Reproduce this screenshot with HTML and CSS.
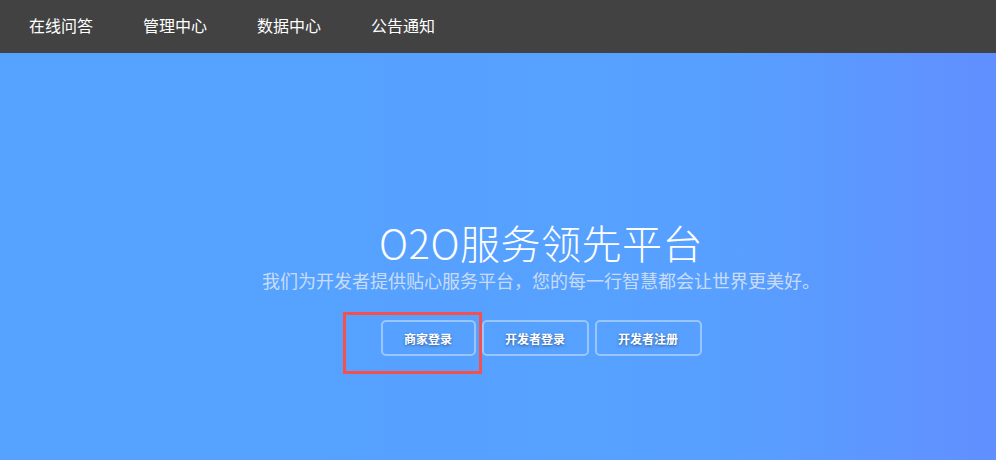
FILE: index.html
```html
<!DOCTYPE html>
<html lang="zh-CN">
<head>
    <meta charset="UTF-8">
    <meta name="viewport" content="width=device-width, initial-scale=1.0">
    <title>O2O服务领先平台</title>
    <link rel="stylesheet" href="styles.css">
</head>
<body>
    <!-- top nav -->
    <div class="top-nav">
        <a class="nav-item" href="#">在线问答</a>
        <a class="nav-item" href="#">管理中心</a>
        <a class="nav-item" href="#">数据中心</a>
        <a class="nav-item" href="#">公告通知</a>
    </div>

    <!-- hero -->
    <div class="hero">
        <h1 class="hero-title">O2O服务领先平台</h1>
        <p class="hero-sub">我们为开发者提供贴心服务平台，您的每一行智慧都会让世界更美好。</p>
        <div class="hero-buttons">
            <a class="hero-btn btn-merchant" href="#">商家登录</a>
            <a class="hero-btn" href="#">开发者登录</a>
            <a class="hero-btn" href="#">开发者注册</a>
            <div class="highlight-box"></div>
        </div>
    </div>
</body>
</html>
```

FILE: styles.css
```css
* {
    box-sizing: border-box;
}

body {
    margin: 0;
    height: 100vh;
    display: flex;
    flex-direction: column;
    background: linear-gradient(to right, #55a3ff 0%, #57a0ff 72%, #618fff 100%);
    font-family: "Noto Sans CJK SC", "Noto Sans", sans-serif;
    color: white;
}

.top-nav {
    height: 53px;
    background: #424242;
    display: flex;
    align-items: center;
    padding: 0 0 4px 29px;
    gap: 50px;
}

.nav-item {
    color: white;
    text-decoration: none;
    font-size: 16px;
    line-height: 20px;
}

.hero {
    flex: 1;
    display: flex;
    flex-direction: column;
    align-items: center;
    padding: 166px 0 0 86px;
}

.hero-title {
    margin: 0;
    font-size: 40px;
    font-weight: 300;
    line-height: 46px;
    letter-spacing: 0.5px;
    font-family: "Noto Sans CJK SC", "Open Sans", sans-serif;
}

.hero-sub {
    margin: 3px 0 0 0;
    font-size: 18px;
    line-height: 24px;
    color: rgba(230, 236, 246, 0.8);
}

.hero-buttons {
    position: relative;
    display: flex;
    gap: 6px;
    margin-top: 28px;
}

.hero-btn {
    width: 107px;
    height: 36px;
    display: flex;
    align-items: center;
    justify-content: center;
    border: 2px solid rgba(255, 255, 255, 0.4);
    border-radius: 5px;
    color: white;
    text-decoration: none;
    font-size: 12px;
    font-weight: bold;
    text-shadow: 0 1px 3px rgba(0, 0, 0, 0.45);
}

.btn-merchant {
    width: 95px;
}

/* red marker round the first button */
.highlight-box {
    position: absolute;
    left: -38px;
    top: -8px;
    width: 139px;
    height: 62px;
    border: 3px solid #f5504f;
    pointer-events: none;
}
```
